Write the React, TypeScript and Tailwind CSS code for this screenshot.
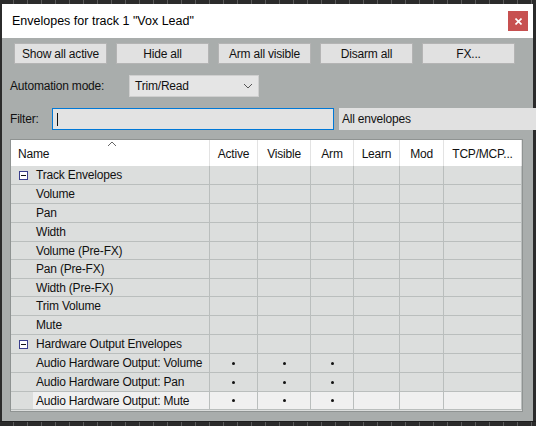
import React from "react";

type Row = { name: string; group?: boolean; h: string; dots?: boolean; selected?: boolean };

const rows: Row[] = [
  { name: "Track Envelopes", group: true, h: "h-[19px]" },
  { name: "Volume", h: "h-[19px]" },
  { name: "Pan", h: "h-[19px]" },
  { name: "Width", h: "h-[19px]" },
  { name: "Volume (Pre-FX)", h: "h-[18px]" },
  { name: "Pan (Pre-FX)", h: "h-[19px]" },
  { name: "Width (Pre-FX)", h: "h-[18px]" },
  { name: "Trim Volume", h: "h-[19px]" },
  { name: "Mute", h: "h-[19px]" },
  { name: "Hardware Output Envelopes", group: true, h: "h-[19px]" },
  { name: "Audio Hardware Output: Volume", h: "h-[19px]", dots: true },
  { name: "Audio Hardware Output: Pan", h: "h-[19px]", dots: true },
  { name: "Audio Hardware Output: Mute", h: "h-[18px]", dots: true, selected: true },
];

const buttons = ["Show all active", "Hide all", "Arm all visible", "Disarm all", "FX..."];

const cols = [
  { label: "Active", w: "w-[48px]" },
  { label: "Visible", w: "w-[53px]" },
  { label: "Arm", w: "w-[43px]" },
  { label: "Learn", w: "w-[46px]" },
  { label: "Mod", w: "w-[44px]" },
  { label: "TCP/MCP...", w: "w-[78px]" },
];

const Dot: React.FC = () => <div className="w-[3px] h-[3px] rounded-full bg-[#111]" />;

const App: React.FC = () => {
  return (
    <div className="w-[536px] h-[426px] bg-[#2b2b2b] flex flex-col font-['Liberation_Sans',Arial,sans-serif] text-[12px] tracking-[-0.2px] text-[#111] overflow-hidden">
      {/* ruler ticks on top */}
      <div className="h-[4px] shrink-0 bg-[repeating-linear-gradient(90deg,#2b2b2b_0_13px,#5a5a5a_13px_14px)]" />

      <div className="flex-1 flex pl-[2px] pr-[3px]">
        {/* Window */}
        <div className="flex-1 flex flex-col bg-[#a9adac]">
          {/* Title bar */}
          <div className="h-[34px] bg-white flex items-center justify-between pl-[10px] pr-[5px]">
            <span className="text-[12.5px] tracking-normal text-[#000]">Envelopes for track 1 "Vox Lead"</span>
            <div className="w-[20px] h-[20px] bg-[#c75050] flex items-center justify-center">
              <svg width="7" height="7" viewBox="0 0 7 7">
                <path d="M0.5 0.5 L6.5 6.5 M6.5 0.5 L0.5 6.5" stroke="#fff" strokeWidth="1.6" />
              </svg>
            </div>
          </div>

          {/* Buttons */}
          <div className="flex gap-[9px] pl-[12px] mt-[5px]">
            {buttons.map((b) => (
              <button
                key={b}
                className="w-[93px] h-[21px] bg-[#e1e1e1] border border-[#b4b4b4] flex items-center justify-center text-[12px] tracking-[-0.2px]"
              >
                {b}
              </button>
            ))}
          </div>

          {/* Automation mode */}
          <div className="flex items-center mt-[11px] h-[22px]">
            <span className="pl-[8px] w-[127px]">Automation mode:</span>
            <div className="w-[130px] h-[22px] bg-[#e5e5e5] border border-[#cfcfcf] flex items-center justify-between pl-[5px] pr-[5px]">
              <span>Trim/Read</span>
              <svg width="10" height="6" viewBox="0 0 10 6">
                <path d="M1 1 L5 5 L9 1" fill="none" stroke="#555" strokeWidth="1" />
              </svg>
            </div>
          </div>

          {/* Filter */}
          <div className="flex items-center mt-[11px] h-[22px]">
            <span className="pl-[8px] w-[50px]">Filter:</span>
            <div className="w-[282px] h-[22px] bg-[#e3e3e3] border border-[#0078d7] flex items-center pl-[4px]">
              <div className="w-px h-[13px] bg-[#111]" />
            </div>
            <div className="flex-1 -mr-[3px] ml-[5px] h-[22px] bg-[#e1e1e1] flex items-center pl-[3px]">
              All envelopes
            </div>
          </div>

          {/* Table */}
          <div className="ml-[8px] mt-[9px] w-[513px] border border-[#8f9392] bg-[#dcdedd]">
            {/* Header */}
            <div className="flex h-[26px] bg-white">
              <div className="relative w-[199px] border-r border-[#e3e3e3] flex items-center pl-[7px] pt-[2px]">
                Name
                <svg className="absolute left-[96px] top-[1px]" width="10" height="6" viewBox="0 0 10 6">
                  <path d="M1 5 L5 1 L9 5" fill="none" stroke="#666" strokeWidth="1" />
                </svg>
              </div>
              {cols.map((c) => (
                <div key={c.label} className={`${c.w} border-r border-[#e3e3e3] flex items-center justify-center pt-[2px]`}>
                  {c.label}
                </div>
              ))}
            </div>

            {/* Rows */}
            {rows.map((r) => (
              <div key={r.name} className={`flex ${r.h}`}>
                <div className="w-[199px] flex border-r border-b border-[#babebd]">
                  <div className="w-[22px] flex items-center justify-center pl-[2px]">
                    {r.group && (
                      <div className="w-[9px] h-[9px] border border-[#3a3e8c] bg-white flex items-center justify-center">
                        <div className="w-[5px] h-px bg-[#111]" />
                      </div>
                    )}
                  </div>
                  <div className={`flex-1 flex items-center pl-[3px] ${r.selected ? "bg-[#f0f0f0]" : ""}`}>
                    {r.name}
                  </div>
                </div>
                {cols.map((c, i) => (
                  <div
                    key={c.label}
                    className={`${c.w} border-r border-b border-[#babebd] flex items-center justify-center ${r.selected ? "bg-[#f0f0f0]" : ""}`}
                  >
                    {r.dots && i < 3 && <Dot />}
                  </div>
                ))}
              </div>
            ))}
            <div className="h-[1px] bg-[#dcdedd]" />
          </div>
        </div>
      </div>

      {/* ruler ticks on bottom */}
      <div className="h-[5px] shrink-0 border-t border-[#1e1e1e] bg-[repeating-linear-gradient(90deg,#2b2b2b_0_13px,#5a5a5a_13px_14px)]" />
    </div>
  );
};

export default App;
